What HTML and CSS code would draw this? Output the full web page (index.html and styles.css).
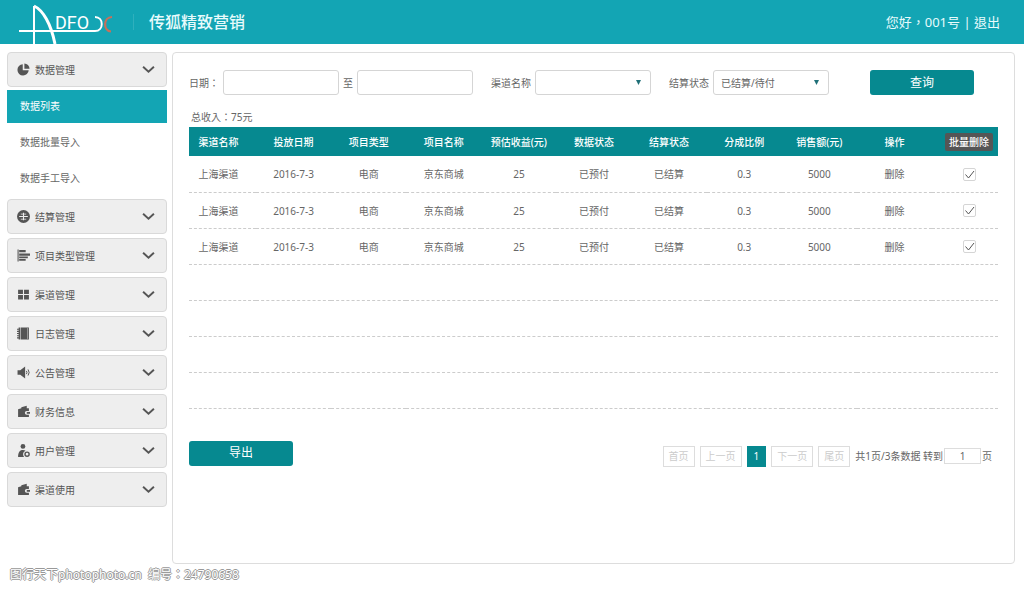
FILE: index.html
```html
<!DOCTYPE html>
<html lang="zh-CN">
<head>
  <meta charset="utf-8">
  <title>传狐精致营销</title>
  <link rel="stylesheet" href="styles.css">
</head>
<body>
  <!-- shared icons -->
  <svg class="sprite" aria-hidden="true">
    <symbol id="chevron" viewBox="0 0 12 8"><path d="M1 1.500 6 6l5-4.500" fill="none" stroke="currentColor" stroke-width="1.800"/></symbol>
    <symbol id="wallet" viewBox="0 0 12 12"><path d="M1 4 4 3V2l5-1.300V3h2v2.500H9A1.700 1.700 0 0 0 9 9h2v2H1z"/><path d="M9 6.400h3v1.700H9z"/></symbol>
  </svg>

  <header class="header">
    <svg class="logo" width="96" height="44" viewBox="18 0 96 44" role="img" aria-label="ADFOX">
      <g fill="none" stroke="#fff">
        <path d="M34 44V6" stroke-width="2"/>
        <path d="M34 6C43 10 51 24 55 44" stroke-width="3"/>
        <path d="M19 31H95C104 31 104 17 95 17" stroke-width="2"/>
      </g>
      <path d="M112 17C103 17 103 31 111 31.500" fill="none" stroke="#c8705a" stroke-width="2.200"/>
      <text class="logo-text" x="55" y="29">DFO</text>
    </svg>
    <h1 class="title">传狐精致营销</h1>
    <div class="user mid-punct">您好，001号 | <a href="#">退出</a></div>
  </header>

  <div class="layout">
    <nav class="sidebar">
      <div class="group">
        <button class="menu" type="button" aria-expanded="true">
          <svg class="icon" viewBox="0 0 12 12"><path d="M5.300 1.200V6.700H10.800A5.200 5.200 0 1 1 5.300 1.200z"/><path d="M6.800.4A5 5 0 0 1 11.600 5.200H6.800z"/></svg>
          <span>数据管理</span>
          <svg class="chevron"><use href="#chevron"/></svg>
        </button>
        <ul class="submenu">
          <li><a class="active" href="#">数据列表</a></li>
          <li><a href="#">数据批量导入</a></li>
          <li><a href="#">数据手工导入</a></li>
        </ul>
      </div>
      <button class="menu" type="button">
        <svg class="icon" viewBox="0 0 12 12"><circle cx="6" cy="6" r="6"/><path d="M6 2.500V9.500M2 6H10" stroke="#eee" stroke-width="1"/><path d="M3.500 3.800H8.500M3.500 8.500H8.500" stroke="#eee" stroke-width=".7"/></svg>
        <span>结算管理</span>
        <svg class="chevron"><use href="#chevron"/></svg>
      </button>
      <button class="menu" type="button">
        <svg class="icon" viewBox="0 0 12 12"><path d="M.5 .5h1v11h-1zM2 1h6v2H2zM2 4.200h10v2H2zM2 7h8v1.500H2zM2 9.300h6v1.500H2z"/></svg>
        <span>项目类型管理</span>
        <svg class="chevron"><use href="#chevron"/></svg>
      </button>
      <button class="menu" type="button">
        <svg class="icon" viewBox="0 0 12 12"><path d="M1 1.500h4.500v4H1zM6.500 1.500H11v4H6.500zM1 6.500h4.500v4H1zM6.500 6.500H11v4H6.500z"/></svg>
        <span>渠道管理</span>
        <svg class="chevron"><use href="#chevron"/></svg>
      </button>
      <button class="menu" type="button">
        <svg class="icon" viewBox="0 0 12 12"><path d="M3.500 .5H11v11H3.500zM1.500 .5H3v11H1.500z"/><path d="M0 2h2.500M0 4h2.500M0 6h2.500M0 8h2.500M0 10h2.500" stroke="currentColor"/><path d="M9.700 1v10" stroke="#bbb" stroke-width=".6"/></svg>
        <span>日志管理</span>
        <svg class="chevron"><use href="#chevron"/></svg>
      </button>
      <button class="menu" type="button">
        <svg class="icon" viewBox="0 0 12 12"><path d="M.5 4H3l4.500-3.500v11L3 8H.5z"/><path d="M8.700 4.500q1 1.500 0 3M10.200 3.200q2 2.800 0 5.600" fill="none" stroke="currentColor" stroke-width=".9"/></svg>
        <span>公告管理</span>
        <svg class="chevron"><use href="#chevron"/></svg>
      </button>
      <button class="menu" type="button">
        <svg class="icon"><use href="#wallet"/></svg>
        <span>财务信息</span>
        <svg class="chevron"><use href="#chevron"/></svg>
      </button>
      <button class="menu" type="button">
        <svg class="icon" viewBox="0 0 12 12"><circle cx="5.500" cy="2.200" r="2.200"/><path d="M1 12C1 7 3 5.500 5.500 5.500q1.700 0 2.500 1C5.500 7 5 10 6.500 12z"/><circle cx="9.300" cy="9.400" r="1.900" fill="none" stroke="currentColor" stroke-width="1.300"/></svg>
        <span>用户管理</span>
        <svg class="chevron"><use href="#chevron"/></svg>
      </button>
      <button class="menu" type="button">
        <svg class="icon"><use href="#wallet"/></svg>
        <span>渠道使用</span>
        <svg class="chevron"><use href="#chevron"/></svg>
      </button>
    </nav>

    <main class="panel">
      <form class="filters">
        <div class="field">
          <label class="mid-punct" for="date-from">日期：</label>
          <input class="control" type="text" id="date-from">
          <label for="date-to">至</label>
          <input class="control" type="text" id="date-to">
        </div>
        <div class="field">
          <label for="channel">渠道名称</label>
          <select class="control" id="channel">
            <option></option>
            <option>上海渠道</option>
          </select>
        </div>
        <div class="field">
          <label for="status">结算状态</label>
          <select class="control" id="status">
            <option>已结算/待付</option>
          </select>
        </div>
        <button class="btn search" type="submit">查询</button>
      </form>

      <p class="total mid-punct">总收入：75元</p>

      <table class="data">
        <thead>
          <tr>
            <th class="first">渠道名称</th>
            <th>投放日期</th>
            <th>项目类型</th>
            <th>项目名称</th>
            <th>预估收益(元)</th>
            <th>数据状态</th>
            <th>结算状态</th>
            <th>分成比例</th>
            <th>销售额(元)</th>
            <th>操作</th>
            <th class="last"><button class="batch" type="button">批量删除</button></th>
          </tr>
        </thead>
        <tbody>
          <tr>
            <td class="first">上海渠道</td><td>2016-7-3</td><td>电商</td><td>京东商城</td><td>25</td><td>已预付</td><td>已结算</td><td>0.3</td><td>5000</td>
            <td><a href="#">删除</a></td>
            <td class="last"><input class="check" type="checkbox" aria-label="选择第1行" checked></td>
          </tr>
          <tr>
            <td class="first">上海渠道</td><td>2016-7-3</td><td>电商</td><td>京东商城</td><td>25</td><td>已预付</td><td>已结算</td><td>0.3</td><td>5000</td>
            <td><a href="#">删除</a></td>
            <td class="last"><input class="check" type="checkbox" aria-label="选择第2行" checked></td>
          </tr>
          <tr>
            <td class="first">上海渠道</td><td>2016-7-3</td><td>电商</td><td>京东商城</td><td>25</td><td>已预付</td><td>已结算</td><td>0.3</td><td>5000</td>
            <td><a href="#">删除</a></td>
            <td class="last"><input class="check" type="checkbox" aria-label="选择第3行" checked></td>
          </tr>
          <tr><td colspan="11"></td></tr>
          <tr><td colspan="11"></td></tr>
          <tr><td colspan="11"></td></tr>
          <tr><td colspan="11"></td></tr>
        </tbody>
      </table>

      <div class="bottom">
        <button class="btn" type="button">导出</button>
        <div class="pager">
          <a class="page" href="#">首页</a>
          <a class="page" href="#">上一页</a>
          <a class="page current" href="#">1</a>
          <a class="page" href="#">下一页</a>
          <a class="page" href="#">尾页</a>
          <div class="jump">
            <label for="page-no">共1页/3条数据 转到</label>
            <input type="text" id="page-no" value="1">
            <span>页</span>
          </div>
        </div>
      </div>
    </main>
  </div>

  <footer class="footer mid-punct">图行天下photophoto.cn&nbsp; 编号：24790658</footer>
</body>
</html>
```

FILE: styles.css
```css
* {
  box-sizing: border-box;
}

body {
  margin: 0;
  background: #fff;
  color: #666;
  font-family: "Noto Sans", "Noto Sans CJK SC", sans-serif;
  font-size: 10px;
  line-height: 16px;
}

button,
input,
select {
  font: inherit;
  color: inherit;
}

button {
  cursor: pointer;
}

a {
  color: inherit;
  text-decoration: none;
}

.sprite {
  display: none;
}

/* full-width punctuation sits in the middle of its box */
.mid-punct {
  font-family: "Noto Sans", "Noto Sans CJK TC", sans-serif;
  font-feature-settings: "locl" 0;
}

/* Header */
.header {
  display: flex;
  align-items: center;
  height: 44px;
  padding: 0 24px 0 18px;
  background: #13a5b4;
  color: #e8fbfc;
}

.logo-text {
  fill: #fff;
  font-family: Roboto, sans-serif;
  font-size: 18px;
  font-weight: 400;
}

.title {
  margin: 0 0 0 19px;
  padding-left: 15px;
  border-left: 1px solid #2fb0bd;
  font-size: 16px;
  font-weight: 500;
  line-height: 16px;
}

.user {
  margin-left: auto;
  font-size: 13px;
}

.layout {
  display: flex;
  gap: 5px;
  padding: 8px 9px 0 7px;
}

/* Sidebar */
.sidebar {
  display: flex;
  flex-direction: column;
  flex: 0 0 160px;
  gap: 4px;
}

.menu {
  display: flex;
  align-items: center;
  gap: 5px;
  width: 100%;
  height: 35px;
  padding: 0 11px 0 9px;
  border: 1px solid #d9d9d9;
  border-radius: 4px;
  background: #eee;
  color: #555;
  text-align: left;
}

.icon {
  width: 13px;
  height: 13px;
  fill: currentColor;
}

.chevron {
  width: 13px;
  height: 9px;
  margin-left: auto;
}

.submenu {
  display: flex;
  flex-direction: column;
  gap: 3px;
  margin: 3px 0 0;
  padding: 0;
  list-style: none;
}

.submenu a {
  display: block;
  padding-left: 13px;
  line-height: 33px;
}

.submenu .active {
  background: #13a5b4;
  color: #fff;
}

/* Main panel */
.panel {
  flex: 1;
  min-width: 0;
  min-height: calc(100vh - 78px);
  padding: 17px 16px;
  border: 1px solid #ddd;
  border-radius: 4px;
}

.filters {
  display: flex;
  align-items: center;
  gap: 18px;
}

.field {
  display: flex;
  align-items: center;
  gap: 4px;
  white-space: nowrap;
}

.control {
  width: 116px;
  height: 25px;
  padding: 0 7px;
  border: 1px solid #d5d5d5;
  border-radius: 3px;
  background: #fff;
}

select.control {
  appearance: none;
  background: #fff url("data:image/svg+xml,%3Csvg xmlns='http://www.w3.org/2000/svg' width='5' height='5'%3E%3Cpath d='M0 0h5L2.500 5z' fill='%23207078'/%3E%3C/svg%3E") no-repeat right 9px center;
}

.btn {
  width: 104px;
  height: 25px;
  padding: 0;
  border: 0;
  border-radius: 3px;
  background: #068990;
  color: #fff;
  font-size: 12px;
}

.search {
  margin: 0 24px 0 auto;
}

.total {
  margin: 14px 0 2px 2px;
}

/* Table */
.data {
  width: 100%;
  table-layout: fixed;
  border-collapse: collapse;
  text-align: center;
}

.data th {
  height: 29px;
  padding: 0;
  background: #068990;
  color: #fff;
  font-weight: 500;
  white-space: nowrap;
}

.data td {
  height: 36px;
  padding: 1px 0 0;
}

.data tbody tr {
  border-bottom: 1px dashed #ccc;
}

.data .first {
  width: 67px;
  padding-right: 8px;
}

.data .last {
  width: 66px;
  padding-left: 8px;
}

.batch {
  height: 18px;
  padding: 0 4px;
  border: 0;
  border-radius: 2px;
  background: #555;
  line-height: 18px;
}

.check {
  appearance: none;
  display: block;
  width: 13px;
  height: 13px;
  margin: 0 auto;
  border: 1px solid #d5d5d5;
  border-radius: 2px;
}

.check:checked {
  background: url("data:image/svg+xml,%3Csvg xmlns='http://www.w3.org/2000/svg' viewBox='0 0 11 11'%3E%3Cpath d='M1.500 5.500 4.500 9 10 2' fill='none' stroke='%23555'/%3E%3C/svg%3E") no-repeat center;
}

/* Export and paging */
.bottom {
  display: flex;
  justify-content: space-between;
  align-items: flex-start;
  margin-top: 32px;
}

.pager {
  display: flex;
  align-items: center;
  gap: 5px;
  padding: 5px 6px 0 0;
}

.page {
  padding: 1px 5px;
  border: 1px solid #ddd;
  color: #ccc;
  line-height: 17px;
}

.page.current {
  padding: 1px 6px;
  border-color: #068990;
  background: #068990;
  color: #fff;
}

.jump {
  display: flex;
  align-items: center;
  gap: 1px;
}

.jump input {
  width: 37px;
  height: 16px;
  padding: 0;
  border: 1px solid #ddd;
  text-align: center;
}

.footer {
  padding-left: 10px;
  color: #fff;
  font-size: 12px;
  line-height: 22px;
  text-shadow: 1px 0 #999, -1px 0 #999, 0 1px #999, 0 -1px #999;
}
```
